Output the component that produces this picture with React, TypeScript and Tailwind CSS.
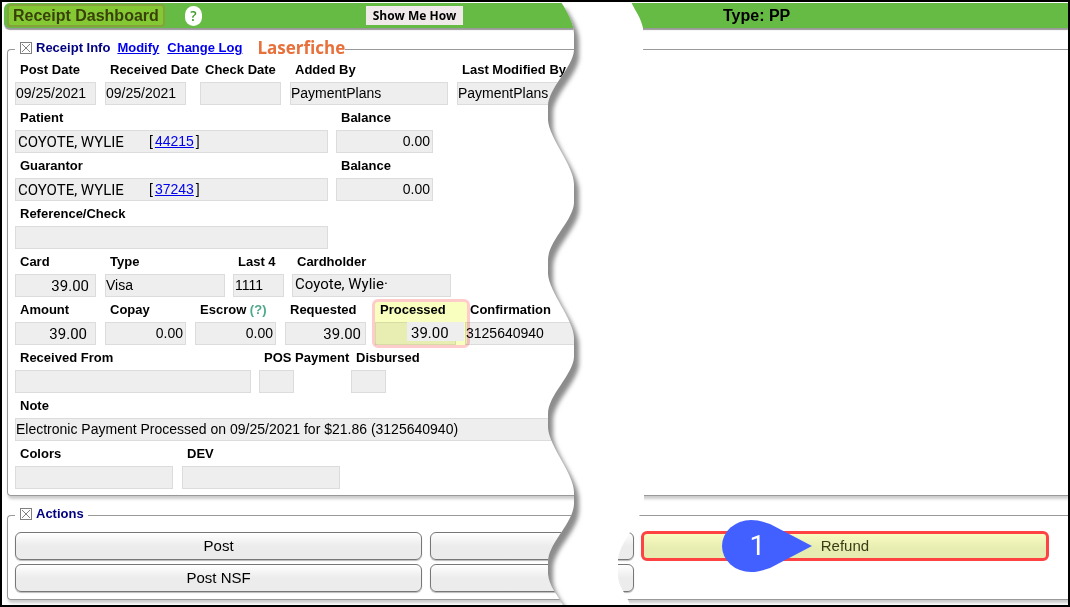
import type { ReactNode } from "react";
import clsx from "clsx";

const BOX = "h-[23px] border border-[#dcdcdc] bg-[#eee] text-black outline-none";
const LABEL = "block h-6 pl-[5px] text-[13px] leading-[23px] font-bold whitespace-nowrap";
const ARIAL = "pb-0.5 text-sm";
const ROBOTO = "font-['Roboto',sans-serif] text-[15px]";
const LINK = "text-[#0000ee] underline";

type FieldProps = {
  id: string;
  label: ReactNode;
  value?: string;
  // width of the box
  width: string;
  // width of the column, where it is wider than the box
  cell?: string;
  font?: string;
  className?: string;
};

function Field({ id, label, value = "", width, cell, font = ARIAL, className }: FieldProps) {
  return (
    <div className={clsx("shrink-0", cell ?? width)}>
      <label htmlFor={id} className={LABEL}>
        {label}
      </label>
      <input id={id} readOnly value={value} className={clsx("block", BOX, width, font, className)} />
    </div>
  );
}

function PersonField({ label, name, account }: { label: string; name: string; account: string }) {
  return (
    <div className="w-[313px] shrink-0">
      <div className={LABEL}>{label}</div>
      <div className={clsx("flex w-full pl-0.5", BOX)}>
        <span className={clsx("w-[131px] leading-[23px]", ROBOTO)}>{name}</span>
        <span className="text-sm leading-5">
          [
          <a href="#account" className={clsx("mx-0.5", LINK)}>
            {account}
          </a>
          ]
        </span>
      </div>
    </div>
  );
}

function Row({ gap = "gap-[9px]", children }: { gap?: string; children: ReactNode }) {
  return <div className={clsx("flex h-12", gap)}>{children}</div>;
}

function Toggle({ label }: { label: string }) {
  return (
    <button type="button" aria-label={label}>
      <svg width="12" height="12" viewBox="0 0 12 12" fill="none" stroke="#808080">
        <rect x="0.5" y="0.5" width="11" height="11" />
        <path d="M2 2l8 8M10 2l-8 8" />
      </svg>
    </button>
  );
}

function Panel({ legend, className, children }: { legend: ReactNode; className: string; children: ReactNode }) {
  return (
    <fieldset
      className={clsx(
        "ml-[5px] min-w-0 rounded-l-[4px] border border-r-0 border-[#999] pl-[7px] shadow-[1px_3px_3px_#ccc]",
        className
      )}
    >
      <legend className="bg-white pl-[5px] text-[13px] leading-[18px] font-bold text-[#000080]">
        <div className="flex h-[18px] items-center pb-0.5">{legend}</div>
      </legend>
      {children}
    </fieldset>
  );
}

function ActionButton({ children }: { children?: ReactNode }) {
  return (
    <button
      type="button"
      className="h-7 rounded-md border border-[#777] bg-linear-to-b from-white to-[#ececec] to-50% text-[15px] shadow-[0_1px_1px_#bbb]"
    >
      {children}
    </button>
  );
}

// left edge of the tear, top to bottom
const EDGE =
  "C568 13 574 24 574 34 V50 C573 68 548 88 548 106 V120 C549 138 574 166 574 184 V203 C573 221 548 241 548 260 V274 C549 292 574 320 574 338 V357 C573 375 548 395 548 414 V428 C549 446 574 474 574 492 V504 C573 524 548 543 548 562 V574 C549 586 557 594 563 605";
const BAND = `M561 2 ${EDGE} L630 605 C626 592 618 588 618 574 V562 C618 548 630 534 634 525 C640 515 644 509 644 496 L643 28 C641 18 636 12 631 2 Z`;

function Tear() {
  return (
    <svg
      className="pointer-events-none absolute top-0 left-[538px] z-30"
      width="110"
      height="603"
      viewBox="540 2 110 603"
    >
      <defs>
        <clipPath id="band">
          <path d={BAND} />
        </clipPath>
        <filter id="soft" x="-20%" y="-5%" width="140%" height="110%">
          <feGaussianBlur stdDeviation="2" />
        </filter>
      </defs>
      <path d={BAND} fill="#fff" />
      <g clipPath="url(#band)">
        <path d={`M561 2 ${EDGE} V640 H530 V2 Z`} transform="translate(5 7)" fill="#8c8c8c" filter="url(#soft)" />
      </g>
    </svg>
  );
}

function Callout({ step }: { step: number }) {
  return (
    <div className="absolute -top-[11px] left-[20%] flex h-[52px] w-[90px] items-center">
      <svg className="absolute inset-0" width="90" height="52" viewBox="0 0 90 52">
        <path d="M90 26L48 4C42 2 36 0 29 0A29 26 0 0 0 29 52C36 52 42 50 48 48Z" fill="#425fff" />
      </svg>
      <span className="relative w-[70px] text-center font-['Roboto',sans-serif] text-[28px] text-white">{step}</span>
    </div>
  );
}

export default function App() {
  return (
    <div className="relative overflow-hidden border-2 border-black bg-white pb-[5px] font-['Liberation_Sans',Arial,sans-serif] text-black">
      <header className="mt-px ml-0.5 grid h-[25px] grid-cols-[362fr_357fr_345fr] items-center rounded-l-md bg-[#66bb44] shadow-[0_2px_1px_#999]">
        <div className="flex items-center">
          <h1 className="ml-[3px] h-[23px] rounded-sm border-2 border-[#84a33b] bg-[#84c934] px-1 text-base leading-[19px] font-bold text-[#384208]">
            Receipt Dashboard
          </h1>
          <button
            type="button"
            className="ml-5 h-5 w-[17px] rounded-full bg-white font-['Open_Sans',sans-serif] text-sm leading-5 font-semibold text-[#3f9a2a]"
          >
            ?
          </button>
        </div>
        <div>
          <button
            type="button"
            className="block h-[19px] w-[97px] bg-[#f1eaea] font-['Open_Sans',sans-serif] text-xs leading-[18px] font-bold"
          >
            Show Me How
          </button>
        </div>
        <div className="text-base font-bold">Type: PP</div>
      </header>

      <Panel
        className="mt-3 pb-[5px]"
        legend={
          <>
            <Toggle label="Toggle receipt info" />
            <span className="ml-1">Receipt Info</span>
            <a href="#modify" className={clsx("ml-[7px]", LINK)}>
              Modify
            </a>
            <a href="#log" className={clsx("ml-2", LINK)}>
              Change Log
            </a>
            <span className="ml-[15px] font-['Open_Sans',sans-serif] text-[17px] leading-[18px] font-bold text-[#e8703a]">
              Laserfiche
            </span>
          </>
        }
      >
        <Row>
          <Field id="post" label="Post Date" value="09/25/2021" width="w-[81px]" />
          <Field id="received" label="Received Date" value="09/25/2021" width="w-[81px]" cell="w-[86px]" />
          <Field id="check" label="Check Date" width="w-[81px]" />
          <Field id="added" label="Added By" value="PaymentPlans" width="w-[158px]" />
          <Field id="modified" label="Last Modified By" value="PaymentPlans" width="w-[158px]" />
        </Row>
        <Row gap="gap-2">
          <PersonField label="Patient" name="COYOTE, WYLIE" account="44215" />
          <Field id="balance1" label="Balance" value="0.00" width="w-[97px]" className="pr-0.5 text-right" />
        </Row>
        <Row gap="gap-2">
          <PersonField label="Guarantor" name="COYOTE, WYLIE" account="37243" />
          <Field id="balance2" label="Balance" value="0.00" width="w-[97px]" className="pr-0.5 text-right" />
        </Row>
        <Row>
          <Field id="reference" label="Reference/Check" width="w-[313px]" />
        </Row>
        <Row gap="gap-2">
          <Field
            id="card"
            label="Card"
            value="39.00"
            width="w-[81px]"
            cell="w-[82px]"
            font={ROBOTO}
            className="pr-1.5 text-right"
          />
          <Field id="type" label="Type" value="Visa" width="w-[120px]" />
          <Field id="last4" label="Last 4" value="1111" width="w-[51px]" className="pl-px" />
          <Field
            id="holder"
            label="Cardholder"
            value="Coyote, Wylie·"
            width="w-[159px]"
            font={ROBOTO}
            className="pb-1 pl-0.5"
          />
        </Row>
        <Row>
          <Field id="amount" label="Amount" value="39.00" width="w-[81px]" font={ROBOTO} className="pr-2 text-right" />
          <Field id="copay" label="Copay" value="0.00" width="w-[81px]" className="pr-0.5 text-right" />
          <Field
            id="escrow"
            label={
              <>
                Escrow <span className="text-[#4fa88c]">(?)</span>
              </>
            }
            value="0.00"
            width="w-[81px]"
            className="pr-0.5 text-right"
          />
          <Field
            id="requested"
            label="Requested"
            value="39.00"
            width="w-[81px]"
            font={ROBOTO}
            className="pr-1 text-right"
          />
          <div className="relative w-[81px] shrink-0">
            <label htmlFor="processed" className={LABEL}>
              Processed
            </label>
            <div className={BOX} />
            {/* highlight */}
            <div className="absolute top-px -left-[3px] z-10 h-[49px] w-[98px] rounded-md border-3 border-[#ffcccc] bg-[#f9ffbe] mix-blend-multiply" />
            <input
              id="processed"
              readOnly
              value="39.00"
              className={clsx("absolute top-6 left-8 z-20 h-[19px] w-[57px] bg-[#eee] pt-1 pl-1 outline-none", ROBOTO)}
            />
          </div>
          <Field id="confirmation" label="Confirmation" value="3125640940" width="w-[158px]" />
        </Row>
        <Row gap="gap-2">
          <Field id="from" label="Received From" width="w-[236px]" />
          <Field id="pos" label="POS Payment" width="w-[35px]" cell="w-[84px]" />
          <Field id="disbursed" label="Disbursed" width="w-[35px]" />
        </Row>
        <Row>
          <Field
            id="note"
            label="Note"
            value="Electronic Payment Processed on 09/25/2021 for $21.86 (3125640940)"
            width="w-[600px]"
          />
        </Row>
        <Row>
          <Field id="colors" label="Colors" width="w-[158px]" />
          <Field id="dev" label="DEV" width="w-[158px]" />
        </Row>
      </Panel>

      <Panel
        className="mt-2.5 pb-[7px]"
        legend={
          <>
            <Toggle label="Toggle actions" />
            <span className="mr-1 ml-1">Actions</span>
          </>
        }
      >
        <div className="mt-2 mr-[19px] grid grid-cols-[2fr_1fr_2fr] gap-x-2 gap-y-1">
          <ActionButton>Post</ActionButton>
          <ActionButton />
          <div className="relative -my-px -ml-px">
            <button
              type="button"
              className="block h-[30px] w-full rounded-md border-3 border-[#ff4242] bg-linear-to-b from-[#f8fcc0] to-[#e7ecb0] to-60% text-[15px] leading-6 text-[#3c3d16]"
            >
              Refund
            </button>
            <Callout step={1} />
          </div>
          <ActionButton>Post NSF</ActionButton>
          <ActionButton />
        </div>
      </Panel>

      <Tear />
    </div>
  );
}
